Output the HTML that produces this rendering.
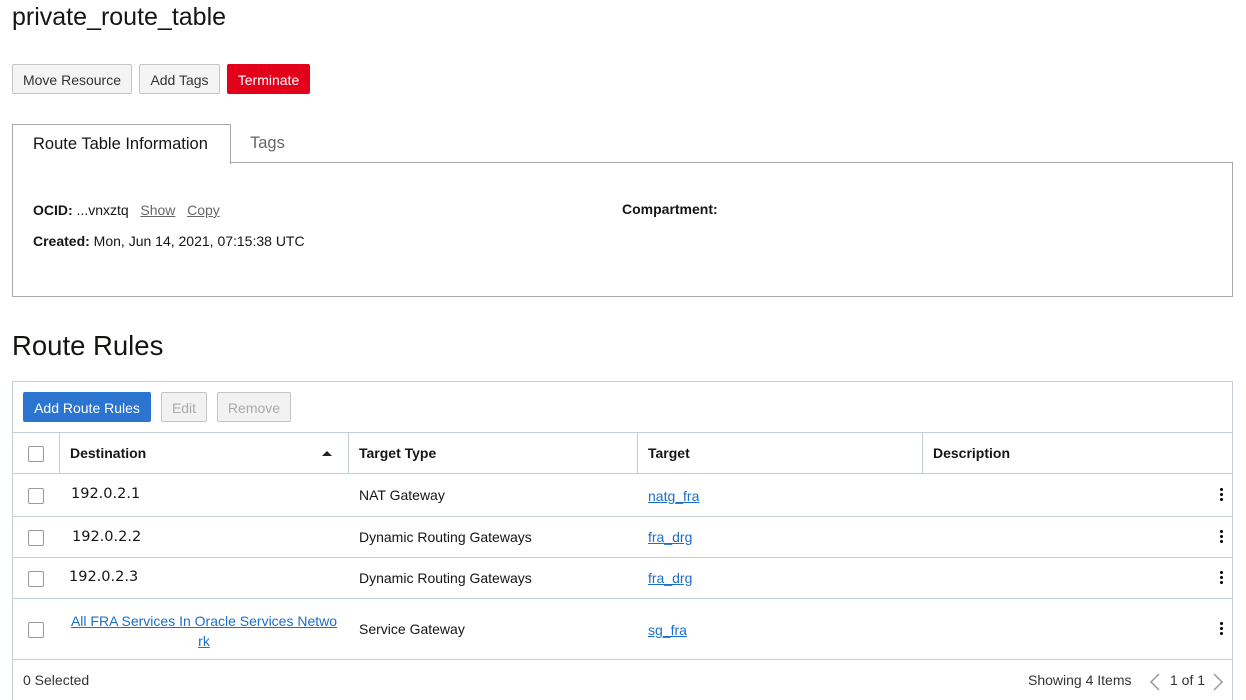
<!DOCTYPE html><html><head><style>
*{margin:0;padding:0;box-sizing:border-box}
body{width:1246px;height:700px;background:#fff;font-family:"Liberation Sans",Arial,sans-serif;color:#161513;position:relative;overflow:hidden;font-size:14px}
.a{position:absolute;white-space:nowrap}
.btn{position:absolute;height:30px;border:1px solid #c4c4c4;border-radius:2px;background:#f4f4f4;font-size:14px;line-height:30px;text-align:center;color:#333}
.hl{position:absolute;left:12px;width:1221px;height:1px;background:#c4ced8}
.vl{position:absolute;top:432px;height:42px;width:1px;background:#c4ced8}
.cb{position:absolute;left:28px;width:16px;height:16px;border:1px solid #9a9a9a;border-radius:2px;background:#fff}
.lk{color:#1a6fc9;text-decoration:underline}
.dots{position:absolute;left:1220px;width:3px}
.dots i{display:block;width:3px;height:3px;border-radius:50%;background:#000;margin-bottom:2px}
.ip{font-size:14.5px;font-family:'DejaVu Sans',sans-serif}
</style></head><body>
<div class="a" style="left:12px;top:3px;font-size:25px">private_route_table</div>
<div class="btn" style="left:12px;top:64px;width:120px">Move Resource</div>
<div class="btn" style="left:139px;top:64px;width:81px">Add Tags</div>
<div class="btn" style="left:227px;top:64px;width:83px;background:#e3001b;border-color:#e3001b;color:#fff">Terminate</div>
<div class="a" style="left:12px;top:162px;width:1221px;height:135px;border:1px solid #a9a9a9;border-top:none"></div>
<div class="a" style="left:230px;top:162px;width:1003px;height:1px;background:#a9a9a9"></div>
<div class="a" style="left:12px;top:124px;width:219px;height:40px;border:1px solid #a9a9a9;border-bottom:none;background:#fff"></div>
<div class="a" style="left:33px;top:135px;font-size:16.5px">Route Table Information</div>
<div class="a" style="left:250px;top:134px;font-size:16.5px;color:#666">Tags</div>
<div class="a" style="left:33px;top:202px"><b>OCID:</b> ...vnxztq&nbsp;&nbsp;&nbsp;<span style="color:#666;text-decoration:underline">Show</span>&nbsp;&nbsp;&nbsp;<span style="color:#666;text-decoration:underline">Copy</span></div>
<div class="a" style="left:33px;top:233px"><b>Created:</b> Mon, Jun 14, 2021, 07:15:38 UTC</div>
<div class="a" style="left:622px;top:201px"><b>Compartment:</b></div>
<div class="a" style="left:12px;top:330px;font-size:27.5px">Route Rules</div>
<div class="a" style="left:12px;top:381px;width:1221px;height:319px;border:1px solid #c4ced8;border-bottom:none"></div>
<div class="btn" style="left:23px;top:392px;width:128px;background:#2b74cf;border-color:#2b74cf;color:#fff">Add Route Rules</div>
<div class="btn" style="left:161px;top:392px;width:46px;color:#aaa;background:#f2f2f2">Edit</div>
<div class="btn" style="left:217px;top:392px;width:74px;color:#aaa;background:#f2f2f2">Remove</div>
<div class="hl" style="top:432px"></div><div class="hl" style="top:473px"></div><div class="hl" style="top:516px"></div><div class="hl" style="top:557px"></div><div class="hl" style="top:598px"></div><div class="hl" style="top:659px"></div>
<div class="vl" style="left:59px"></div><div class="vl" style="left:348px"></div><div class="vl" style="left:637px"></div><div class="vl" style="left:922px"></div>
<div class="cb" style="top:446px"></div><div class="cb" style="top:488px"></div><div class="cb" style="top:530px"></div><div class="cb" style="top:571px"></div><div class="cb" style="top:622px"></div>
<div class="a" style="left:70px;top:445px;font-weight:bold">Destination</div>
<div class="a" style="left:322px;top:451px;width:0;height:0;border-left:5px solid transparent;border-right:5px solid transparent;border-bottom:5px solid #222"></div>
<div class="a" style="left:359px;top:445px;font-weight:bold">Target Type</div>
<div class="a" style="left:648px;top:445px;font-weight:bold">Target</div>
<div class="a" style="left:933px;top:445px;font-weight:bold">Description</div>
<div class="a ip" style="left:71px;top:486px">192.0.2.1</div>
<div class="a ip" style="left:72px;top:529px">192.0.2.2</div>
<div class="a ip" style="left:69px;top:569px">192.0.2.3</div>
<div class="a lk" style="left:60px;top:611px;width:288px;text-align:center;line-height:20px">All FRA Services In Oracle Services Netwo<br>rk</div>
<div class="a" style="left:359px;top:487px">NAT Gateway</div>
<div class="a" style="left:359px;top:529px">Dynamic Routing Gateways</div>
<div class="a" style="left:359px;top:570px">Dynamic Routing Gateways</div>
<div class="a" style="left:359px;top:621px">Service Gateway</div>
<div class="a lk" style="left:648px;top:488px">natg_fra</div>
<div class="a lk" style="left:648px;top:529px">fra_drg</div>
<div class="a lk" style="left:648px;top:570px">fra_drg</div>
<div class="a lk" style="left:648px;top:622px">sg_fra</div>
<div class="dots" style="top:488px"><i></i><i></i><i></i></div>
<div class="dots" style="top:530px"><i></i><i></i><i></i></div>
<div class="dots" style="top:571px"><i></i><i></i><i></i></div>
<div class="dots" style="top:622px"><i></i><i></i><i></i></div>
<div class="a" style="left:23px;top:672px;color:#333">0 Selected</div>
<div class="a" style="left:1028px;top:672px;color:#333">Showing 4 Items</div>
<svg class="a" style="left:1149px;top:673px" width="12" height="18"><path d="M10 1 L2 9 L10 17" stroke="#999" fill="none" stroke-width="1.5"/></svg>
<div class="a" style="left:1170px;top:672px;color:#333">1 of 1</div>
<svg class="a" style="left:1212px;top:673px" width="12" height="18"><path d="M2 1 L10 9 L2 17" stroke="#999" fill="none" stroke-width="1.5"/></svg>
</body></html>
